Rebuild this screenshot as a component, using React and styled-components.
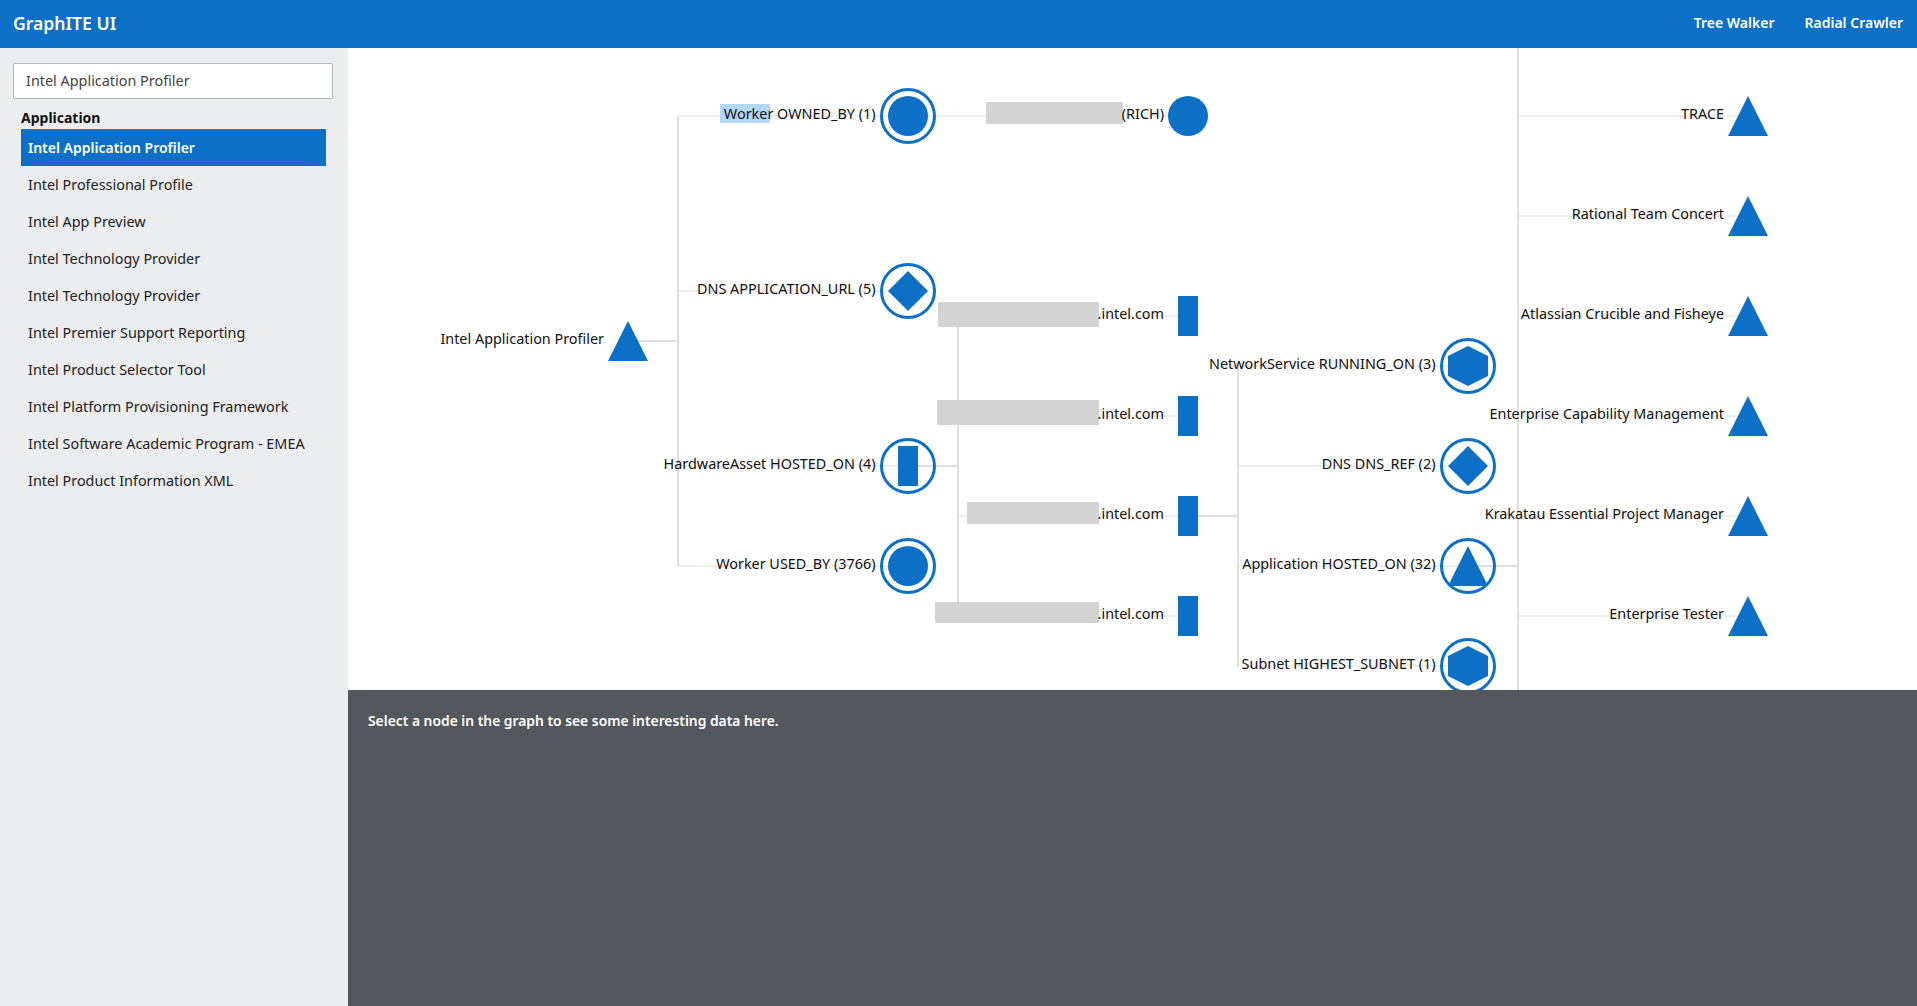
import React from "react";
import styled, { createGlobalStyle } from "styled-components";

const BLUE = "#0b70c6";

const menuItems = [
  "Intel Application Profiler",
  "Intel Professional Profile",
  "Intel App Preview",
  "Intel Technology Provider",
  "Intel Technology Provider",
  "Intel Premier Support Reporting",
  "Intel Product Selector Tool",
  "Intel Platform Provisioning Framework",
  "Intel Software Academic Program - EMEA",
  "Intel Product Information XML",
];

// coordinates are page pixels, the svg viewBox starts where the graph panel starts
const nodes = [
  { x: 628, y: 341, shape: "triangle", label: "Intel Application Profiler" },
  { x: 908, y: 116, shape: "circle", ring: true, label: "Worker OWNED_BY (1)" },
  { x: 908, y: 291, shape: "diamond", ring: true, label: "DNS APPLICATION_URL (5)" },
  { x: 908, y: 466, shape: "rect", ring: true, label: "HardwareAsset HOSTED_ON (4)" },
  { x: 908, y: 566, shape: "circle", ring: true, label: "Worker USED_BY (3766)" },
  { x: 1188, y: 116, shape: "circle", label: "(RICH)", mask: [986, 102, 137, 22] },
  { x: 1188, y: 316, shape: "rect", label: ".intel.com", mask: [938, 302, 161, 25] },
  { x: 1188, y: 416, shape: "rect", label: ".intel.com", mask: [937, 400, 162, 25] },
  { x: 1188, y: 516, shape: "rect", label: ".intel.com", mask: [967, 502, 132, 22] },
  { x: 1188, y: 616, shape: "rect", label: ".intel.com", mask: [935, 602, 164, 21] },
  { x: 1468, y: 366, shape: "hexagon", ring: true, label: "NetworkService RUNNING_ON (3)" },
  { x: 1468, y: 466, shape: "diamond", ring: true, label: "DNS DNS_REF (2)" },
  { x: 1468, y: 566, shape: "triangle", ring: true, label: "Application HOSTED_ON (32)" },
  { x: 1468, y: 666, shape: "hexagon", ring: true, label: "Subnet HIGHEST_SUBNET (1)" },
  { x: 1748, y: 116, shape: "triangle", label: "TRACE" },
  { x: 1748, y: 216, shape: "triangle", label: "Rational Team Concert" },
  { x: 1748, y: 316, shape: "triangle", label: "Atlassian Crucible and Fisheye" },
  { x: 1748, y: 416, shape: "triangle", label: "Enterprise Capability Management" },
  { x: 1748, y: 516, shape: "triangle", label: "Krakatau Essential Project Manager" },
  { x: 1748, y: 616, shape: "triangle", label: "Enterprise Tester" },
];

// segments shared by several children come out darker than the single leaves
const trunks = [
  "M628 341H678",
  "M678 116V566",
  "M908 466H958",
  "M958 316V616",
  "M1188 516H1238",
  "M1238 366V666",
  "M1468 566H1518",
  "M1518 48V690",
];

const leaves = [
  ...[116, 291, 466, 566].map((y) => `M678 ${y}H908`),
  "M908 116H1188",
  ...[316, 416, 516, 616].map((y) => `M958 ${y}H1188`),
  ...[366, 466, 566, 666].map((y) => `M1238 ${y}H1468`),
  ...[116, 216, 316, 416, 516, 616].map((y) => `M1518 ${y}H1748`),
];

const Shape = ({ shape, x, y }) => {
  switch (shape) {
    case "circle":
      return <circle cx={x} cy={y} r={20} fill={BLUE} />;
    case "rect":
      return <rect x={x - 10} y={y - 20} width={20} height={40} fill={BLUE} />;
    case "diamond":
      return <polygon points={`${x},${y - 20} ${x + 20},${y} ${x},${y + 20} ${x - 20},${y}`} fill={BLUE} />;
    case "hexagon":
      return (
        <polygon
          points={`${x},${y - 20} ${x + 20},${y - 10} ${x + 20},${y + 10} ${x},${y + 20} ${x - 20},${y + 10} ${x - 20},${y - 10}`}
          fill={BLUE}
        />
      );
    default:
      return <polygon points={`${x},${y - 20} ${x + 20},${y + 20} ${x - 20},${y + 20}`} fill={BLUE} />;
  }
};

const Graph = () => (
  <GraphSvg viewBox="348 48 1569 642">
    {leaves.map((d, i) => (
      <LinkPath key={i} d={d} />
    ))}
    {trunks.map((d, i) => (
      <LinkPath key={i} d={d} $trunk />
    ))}
    {nodes
      .filter((n) => n.mask)
      .map((n, i) => (
        <rect key={i} x={n.mask[0]} y={n.mask[1]} width={n.mask[2]} height={n.mask[3]} fill="#d3d3d3" />
      ))}
    <rect x={720} y={104} width={50} height={19} fill="#b3d7fe" />
    {nodes.map((n, i) => (
      <g key={i}>
        {n.ring && <RingCircle cx={n.x} cy={n.y} r={26.5} />}
        <Shape shape={n.shape} x={n.x} y={n.y} />
        <NodeLabel x={n.x - (n.ring ? 32.5 : 24)} y={n.y + 3}>
          {n.label}
        </NodeLabel>
      </g>
    ))}
  </GraphSvg>
);

const App = () => (
  <>
    <GlobalStyle />
    <Page>
      <Header>
        <Brand>GraphITE UI</Brand>
        <Nav>
          <NavLink>Tree Walker</NavLink>
          <NavLink>Radial Crawler</NavLink>
        </Nav>
      </Header>
      <Body>
        <Sidebar>
          <SearchInput defaultValue="Intel Application Profiler" />
          <GroupTitle>Application</GroupTitle>
          <MenuList>
            {menuItems.map((item, i) => (
              <MenuItem key={i} $active={i === 0}>
                {item}
              </MenuItem>
            ))}
          </MenuList>
        </Sidebar>
        <Main>
          <GraphArea>
            <Graph />
          </GraphArea>
          <DetailPanel>Select a node in the graph to see some interesting data here.</DetailPanel>
        </Main>
      </Body>
    </Page>
  </>
);

const GlobalStyle = createGlobalStyle`
  html, body {
    margin: 0;
    padding: 0;
    height: 100%;
    overflow: hidden;
  }
  body {
    font-family: "Noto Sans", "Open Sans", sans-serif;
    font-size: 14.4px;
  }
`;

const Page = styled.div`
  display: flex;
  flex-direction: column;
  height: 1006px;
`;

const Header = styled.header`
  display: flex;
  align-items: center;
  justify-content: space-between;
  height: 48px;
  flex: none;
  box-sizing: border-box;
  padding: 0 14px 3px 13px;
  background: ${BLUE};
  color: #fff;
`;

const Brand = styled.div`
  font-size: 17.6px;
  font-weight: 600;
`;

const Nav = styled.nav`
  display: flex;
  gap: 30px;
`;

const NavLink = styled.a`
  font-size: 14px;
  font-weight: 600;
  cursor: pointer;
`;

const Body = styled.div`
  display: flex;
  flex: 1;
  min-height: 0;
`;

const Sidebar = styled.aside`
  width: 348px;
  flex: none;
  box-sizing: border-box;
  padding: 15px 15px 0 13px;
  background: #ecedef;
`;

const SearchInput = styled.input`
  display: block;
  box-sizing: border-box;
  width: 320px;
  height: 36px;
  padding: 0 12px 2px;
  border: 1px solid #b5babd;
  border-radius: 2px;
  background: #fff;
  color: #444;
  font: inherit;
  outline: none;
`;

const GroupTitle = styled.div`
  margin: 8px 0 1px 8px;
  height: 21px;
  line-height: 21px;
  font-size: 14px;
  font-weight: 700;
  color: #111;
`;

const MenuList = styled.ul`
  list-style: none;
  margin: 0 0 0 8px;
  padding: 0;
  width: 305px;
`;

const MenuItem = styled.li`
  height: 37px;
  line-height: 37px;
  padding-left: 7px;
  background: ${(p) => (p.$active ? BLUE : "transparent")};
  color: ${(p) => (p.$active ? "#fff" : "#222")};
  font-size: ${(p) => (p.$active ? "14px" : "14.4px")};
  font-weight: ${(p) => (p.$active ? 600 : 400)};
  white-space: nowrap;
`;

const Main = styled.main`
  display: flex;
  flex-direction: column;
  flex: 1;
  min-width: 0;
`;

const GraphArea = styled.div`
  height: 642px;
  flex: none;
  overflow: hidden;
  background: #fff;
`;

const GraphSvg = styled.svg`
  display: block;
  width: 1569px;
  height: 642px;
`;

const LinkPath = styled.path`
  fill: none;
  stroke: ${(p) => (p.$trunk ? "#dedede" : "#eeeeee")};
  stroke-width: 2;
`;

const RingCircle = styled.circle`
  fill: none;
  stroke: ${BLUE};
  stroke-width: 3;
`;

const NodeLabel = styled.text`
  font-family: "Noto Sans", "Open Sans", sans-serif;
  font-size: 14.4px;
  fill: #111;
  text-anchor: end;
`;

const DetailPanel = styled.section`
  flex: 1;
  padding: 21px 20px;
  background: #54575c;
  color: #fff;
  font-size: 13.85px;
  font-weight: 600;
`;

export default App;
